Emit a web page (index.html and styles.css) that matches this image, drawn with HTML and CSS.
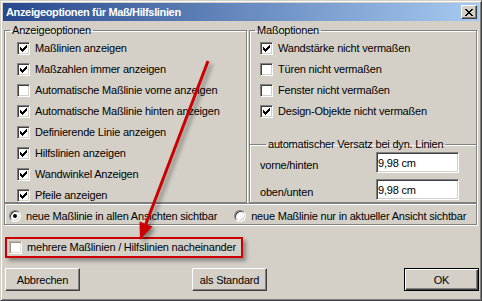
FILE: index.html
```html
<!DOCTYPE html>
<html lang="de">
<head>
  <meta charset="UTF-8">
  <title>Anzeigeoptionen für Maß/Hilfslinien</title>
  <link rel="stylesheet" href="styles.css">
</head>
<body>
  <div class="window">
    <div class="caption">
      <span class="caption-title">Anzeigeoptionen für Maß/Hilfslinien</span>
      <span class="caption-close">
        <svg width="8" height="7" viewBox="0 0 8 7" shape-rendering="crispEdges"><path d="M0 0h2v1H0z M6 0h2v1H6z M1 1h2v1H1z M5 1h2v1H5z M2 2h4v1H2z M3 3h2v1H3z M2 4h4v1H2z M1 5h2v1H1z M5 5h2v1H5z M0 6h2v1H0z M6 6h2v1H6z"/></svg>
      </span>
    </div>

    <div class="client">
      <div class="groups">
        <fieldset class="group group-left">
          <legend>Anzeigeoptionen</legend>
          <div class="rows rows-left">
            <label class="check"><span class="box checked"></span>Maßlinien anzeigen</label>
            <label class="check"><span class="box checked"></span>Maßzahlen immer anzeigen</label>
            <label class="check"><span class="box"></span>Automatische Maßlinie vorne anzeigen</label>
            <label class="check"><span class="box checked"></span>Automatische Maßlinie hinten anzeigen</label>
            <label class="check"><span class="box checked"></span>Definierende Linie anzeigen</label>
            <label class="check"><span class="box checked"></span>Hilfslinien anzeigen</label>
            <label class="check"><span class="box checked"></span>Wandwinkel Anzeigen</label>
            <label class="check"><span class="box checked"></span>Pfeile anzeigen</label>
          </div>
        </fieldset>

        <fieldset class="group group-right">
          <legend>Maßoptionen</legend>
          <div class="rows rows-right">
            <label class="check"><span class="box checked"></span>Wandstärke nicht vermaßen</label>
            <label class="check"><span class="box"></span>Türen nicht vermaßen</label>
            <label class="check"><span class="box"></span>Fenster nicht vermaßen</label>
            <label class="check"><span class="box checked"></span>Design-Objekte nicht vermaßen</label>
          </div>

          <fieldset class="subgroup">
            <legend>automatischer Versatz bei dyn. Linien</legend>
            <div class="field">
              <span class="field-label">vorne/hinten</span>
              <span class="input">9,98 cm</span>
            </div>
            <div class="field">
              <span class="field-label">oben/unten</span>
              <span class="input">9,98 cm</span>
            </div>
          </fieldset>
        </fieldset>
      </div>

      <div class="radio-row">
        <label class="option"><span class="radio on"></span>neue Maßlinie in allen Ansichten sichtbar</label>
        <label class="option option-second"><span class="radio"></span>neue Maßlinie nur in aktueller Ansicht sichtbar</label>
      </div>

      <div class="highlight">
        <label class="check"><span class="box faded"></span>mehrere Maßlinien / Hilfslinien nacheinander</label>
      </div>

      <div class="buttons">
        <button class="btn">Abbrechen</button>
        <button class="btn btn-standard">als Standard</button>
        <button class="btn btn-default">OK</button>
      </div>
    </div>
  </div>

  <!-- annotation arrow drawn over the dialog -->
  <svg class="arrow" width="482" height="301" viewBox="0 0 482 301">
    <g class="arrow-shape">
      <line x1="208" y1="61" x2="144" y2="229" stroke="#cc0000" stroke-width="3"/>
      <polygon points="140,240 152.5,226.6 139.5,221.6" fill="#cc0000"/>
    </g>
  </svg>
</body>
</html>
```

FILE: styles.css
```css
body {
  margin: 0;
  font-family: "Liberation Sans", Arial, sans-serif;
  font-size: 11px;
  letter-spacing: -0.2px;
  color: #000;
  background: #d4d0c8;
}

.window {
  box-sizing: border-box;
  width: 482px;
  height: 301px;
  display: flex;
  flex-direction: column;
  padding: 2px;
  background: #d4d0c8;
  border: 1px solid;
  border-color: #d4d0c8 #404040 #404040 #d4d0c8;
  box-shadow: inset 1px 1px #fff, inset -1px -1px #808080;
}

/* title bar */
.caption {
  height: 18px;
  flex: none;
  display: flex;
  align-items: center;
  justify-content: space-between;
  padding: 0 2px 0 3px;
  background: linear-gradient(to right, #27488d, #a6caf0);
  color: #fff;
  font-weight: bold;
  font-size: 11px;
  letter-spacing: -0.35px;
}

.caption-close {
  box-sizing: border-box;
  width: 16px;
  height: 14px;
  display: flex;
  align-items: center;
  justify-content: center;
  background: #d4d0c8;
  border: 1px solid;
  border-color: #fff #404040 #404040 #fff;
  box-shadow: inset -1px -1px #808080;
}

.client {
  flex: 1;
  display: flex;
  flex-direction: column;
}

/* group boxes */
.groups {
  display: flex;
  gap: 2px;
  height: 179px;
  margin-top: 3px;
  padding-left: 1px;
}

.group {
  box-sizing: border-box;
  margin: 0;
  padding: 0;
  min-inline-size: 0;
  border: 1px solid #808080;
  box-shadow: inset 1px 1px #fff, 1px 1px #fff;
}

.group-left {
  width: 243px;
}

.group-right {
  width: 228px;
}

legend {
  margin-left: 5px;
  padding: 0 2px;
  line-height: 13px;
}

.rows {
  display: flex;
  flex-direction: column;
  gap: 8px;
  padding-top: 5px;
}

.rows-left {
  padding-left: 12px;
}

.rows-right {
  padding-left: 10px;
}

.check {
  display: flex;
  align-items: center;
  gap: 5px;
  height: 13px;
  line-height: 13px;
  white-space: nowrap;
}

.box {
  box-sizing: border-box;
  flex: none;
  width: 13px;
  height: 13px;
  background: #fff;
  border: 1px solid;
  border-color: #808080 #fff #fff #808080;
  box-shadow: inset 1px 1px #404040, inset -1px -1px #d4d0c8;
}

.box.checked {
  background: #fff url("data:image/svg+xml,%3Csvg xmlns='http://www.w3.org/2000/svg' width='11' height='11' shape-rendering='crispEdges'%3E%3Cpath d='M2 4h1v3H2z M3 5h1v3H3z M4 6h1v3H4z M5 5h1v3H5z M6 4h1v3H6z M7 3h1v3H7z M8 2h1v3H8z'/%3E%3C/svg%3E") no-repeat 0 0;
}

.box.faded {
  border-color: #b8b4ac #fff #fff #b8b4ac;
  box-shadow: inset 1px 1px #9a968e, inset -1px -1px #e4e0d8;
}

.subgroup {
  margin: 20px 0 0;
  padding: 1px 0 0 10px;
  min-inline-size: 0;
  border: none;
  border-top: 1px solid #808080;
  box-shadow: inset 0 1px #fff;
}

.subgroup legend {
  margin-left: 6px;
}

.field {
  display: flex;
  align-items: flex-start;
  margin-bottom: 6px;
}

.field-label {
  width: 116px;
  padding-top: 7px;
  line-height: 13px;
}

.input {
  box-sizing: border-box;
  width: 83px;
  height: 21px;
  display: flex;
  align-items: center;
  padding-left: 1px;
  background: #fff;
  border: 1px solid;
  border-color: #808080 #fff #fff #808080;
  box-shadow: inset 1px 1px #404040, inset -1px -1px #d4d0c8;
}

/* radio row */
.radio-row {
  box-sizing: border-box;
  width: 473px;
  height: 22px;
  margin-left: 1px;
  display: flex;
  padding: 6px 0 0 4px;
  border: 1px solid #808080;
  box-shadow: inset 1px 1px #fff, 1px 1px #fff;
}

.option {
  display: flex;
  align-items: center;
  gap: 5px;
  height: 12px;
  white-space: nowrap;
}

.option-second {
  margin-left: 17px;
}

.radio {
  box-sizing: border-box;
  flex: none;
  width: 12px;
  height: 12px;
  display: flex;
  align-items: center;
  justify-content: center;
  border-radius: 50%;
  background: #fff;
  border: 1px solid;
  border-color: #808080 #fff #fff #808080;
  box-shadow: inset 1px 1px #404040, inset -1px -1px #d4d0c8;
}

.radio.on::after {
  content: "";
  width: 4px;
  height: 4px;
  border-radius: 50%;
  background: #000;
}

/* red highlight frame */
.highlight {
  box-sizing: border-box;
  width: 238px;
  height: 21px;
  margin: 12px 0 0 2px;
  display: flex;
  align-items: center;
  padding-left: 2px;
  border: 2px solid #cc0000;
  box-shadow: 3px 3px 4px rgba(0, 0, 0, 0.35);
}

/* buttons */
.buttons {
  display: flex;
  margin-top: 10px;
  padding-left: 2px;
}

.btn {
  box-sizing: border-box;
  width: 75px;
  height: 23px;
  padding: 0;
  font-family: "Liberation Sans", Arial, sans-serif;
  font-size: 11px;
  letter-spacing: -0.2px;
  color: #000;
  background: #d4d0c8;
  border: 1px solid;
  border-color: #fff #404040 #404040 #fff;
  box-shadow: inset -1px -1px #808080;
}

.btn-standard {
  margin-left: 112px;
}

.btn-default {
  margin-left: auto;
  border-color: #000;
  box-shadow: inset 1px 1px #fff, inset -1px -1px #404040, inset -2px -2px #808080;
}

.arrow {
  position: absolute;
  top: 0;
  left: 0;
  pointer-events: none;
}

.arrow-shape {
  filter: drop-shadow(3px 3px 2px rgba(0, 0, 0, 0.4));
}
```
